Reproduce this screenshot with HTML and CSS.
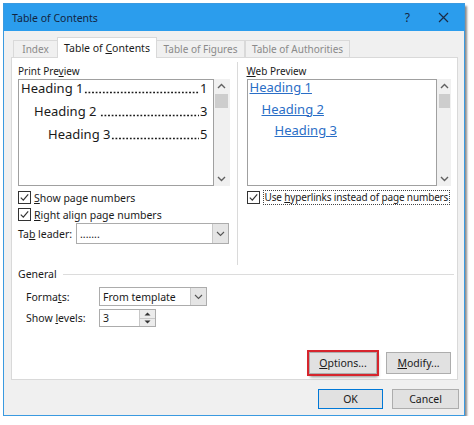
FILE: index.html
```html
<!DOCTYPE html>
<html lang="en">
<head>
    <meta charset="UTF-8">
    <meta name="viewport" content="width=device-width, initial-scale=1.0">
    <title>Table of Contents</title>
    <link rel="stylesheet" href="styles.css">
</head>
<body>
    <div class="window">
        <div class="titlebar">
            <span class="title">Table of Contents</span>
            <span class="help">?</span>
            <span class="close">
                <svg width="11" height="11" viewBox="0 0 11 11"><path d="M1 1L10 10M10 1L1 10" stroke="#1b2b45" stroke-width="1.2" fill="none"/></svg>
            </span>
        </div>
        <div class="content">
            <div class="tabs">
                <div class="tab index"><span>Index</span></div>
                <div class="tab active"><span>Table of <u>C</u>ontents</span></div>
                <div class="tab figures"><span>Table of Figures</span></div>
                <div class="tab authorities"><span>Table of Authorities</span></div>
            </div>

            <div class="panel">
                <div class="previews">
                    <div class="column print">
                        <div class="label">Print Pre<u>v</u>iew</div>
                        <div class="preview">
                            <div class="preview-list">
                                <div class="toc-row"><span class="toc-name">Heading 1</span><span class="toc-dots"></span><span class="toc-num">1</span></div>
                                <div class="toc-row level2"><span class="toc-name">Heading 2</span><span class="toc-dots spaced"></span><span class="toc-num">3</span></div>
                                <div class="toc-row level3"><span class="toc-name">Heading 3</span><span class="toc-dots"></span><span class="toc-num">5</span></div>
                            </div>
                            <div class="scrollbar">
                                <svg class="arrow" width="9" height="6" viewBox="0 0 9 6"><path d="M1 5L4.5 1.5L8 5" stroke="#606060" stroke-width="1.4" fill="none"/></svg>
                                <div class="thumb"></div>
                                <svg class="arrow down" width="9" height="6" viewBox="0 0 9 6"><path d="M1 1L4.5 4.5L8 1" stroke="#606060" stroke-width="1.4" fill="none"/></svg>
                            </div>
                        </div>
                        <div class="check">
                            <svg class="box" width="13" height="13" viewBox="0 0 13 13"><rect x="0.5" y="0.5" width="12" height="12" fill="#fff" stroke="#333"/><path d="M2.8 6.6L5.3 9.1L10.2 3.4" stroke="#333" stroke-width="1.2" fill="none"/></svg>
                            <span><u>S</u>how page numbers</span>
                        </div>
                        <div class="check">
                            <svg class="box" width="13" height="13" viewBox="0 0 13 13"><rect x="0.5" y="0.5" width="12" height="12" fill="#fff" stroke="#333"/><path d="M2.8 6.6L5.3 9.1L10.2 3.4" stroke="#333" stroke-width="1.2" fill="none"/></svg>
                            <span><u>R</u>ight align page numbers</span>
                        </div>
                        <div class="leader-row">
                            <span class="leader-label">Ta<u>b</u> leader:</span>
                            <div class="select leader">
                                <span class="select-text">.......</span>
                                <span class="drop">
                                    <svg width="9" height="6" viewBox="0 0 9 6"><path d="M1 1L4.5 4.5L8 1" stroke="#555" stroke-width="1.1" fill="none"/></svg>
                                </span>
                            </div>
                        </div>
                    </div>

                    <div class="divider"></div>

                    <div class="column web">
                        <div class="label"><u>W</u>eb Preview</div>
                        <div class="preview">
                            <div class="preview-list">
                                <div class="web-row"><a href="#">Heading 1</a></div>
                                <div class="web-row level2"><a href="#">Heading 2</a></div>
                                <div class="web-row level3"><a href="#">Heading 3</a></div>
                            </div>
                            <div class="scrollbar">
                                <svg class="arrow" width="9" height="6" viewBox="0 0 9 6"><path d="M1 5L4.5 1.5L8 5" stroke="#606060" stroke-width="1.4" fill="none"/></svg>
                                <div class="thumb"></div>
                                <svg class="arrow down" width="9" height="6" viewBox="0 0 9 6"><path d="M1 1L4.5 4.5L8 1" stroke="#606060" stroke-width="1.4" fill="none"/></svg>
                            </div>
                        </div>
                        <div class="check">
                            <svg class="box" width="13" height="13" viewBox="0 0 13 13"><rect x="0.5" y="0.5" width="12" height="12" fill="#fff" stroke="#333"/><path d="M2.8 6.6L5.3 9.1L10.2 3.4" stroke="#333" stroke-width="1.2" fill="none"/></svg>
                            <span class="focus">Use <u>h</u>yperlinks instead of page numbers</span>
                        </div>
                    </div>
                </div>

                <div class="general">
                    <div class="group-title">
                        <span>General</span>
                        <span class="group-line"></span>
                    </div>
                    <div class="field-row">
                        <span class="field-label">Forma<u>t</u>s:</span>
                        <div class="select formats">
                            <span class="select-text">From template</span>
                            <span class="drop">
                                <svg width="9" height="6" viewBox="0 0 9 6"><path d="M1 1L4.5 4.5L8 1" stroke="#555" stroke-width="1.1" fill="none"/></svg>
                            </span>
                        </div>
                    </div>
                    <div class="field-row levels">
                        <span class="field-label">Show <u>l</u>evels:</span>
                        <div class="spin">
                            <span class="select-text">3</span>
                            <span class="spin-buttons">
                                <span class="spin-btn"><svg width="7" height="4" viewBox="0 0 7 4"><path d="M0.5 3.5L3.5 0.5L6.5 3.5Z" fill="#333"/></svg></span>
                                <span class="spin-btn"><svg width="7" height="4" viewBox="0 0 7 4"><path d="M0.5 0.5L3.5 3.5L6.5 0.5Z" fill="#333"/></svg></span>
                            </span>
                        </div>
                    </div>
                </div>

                <div class="panel-buttons">
                    <button class="btn options"><u>O</u>ptions...</button>
                    <button class="btn modify"><u>M</u>odify...</button>
                </div>
            </div>

            <div class="footer">
                <button class="btn ok">OK</button>
                <button class="btn cancel">Cancel</button>
            </div>
        </div>
    </div>
</body>
</html>
```

FILE: styles.css
```css
body {
    margin: 0;
    padding: 0;
    background: #fff;
    font-family: "Noto Sans", "Open Sans", sans-serif;
    font-size: 10px;
    color: #1a1a1a;
}

.window {
    margin: 3px 0 0 3px;
    width: 462px;
    height: 413px;
    box-sizing: border-box;
    border: 1px solid #3a9ae0;
    background: #f0f0f0;
    display: flex;
    flex-direction: column;
    box-shadow: 2px 3px 2px #8c8c8c;
}

.titlebar {
    height: 27px;
    flex: 0 0 auto;
    background: #2b9ded;
    display: flex;
    align-items: center;
    padding: 0 15px 0 8px;
    color: #13243f;
    font-size: 10.5px;
}

.help {
    margin-left: auto;
    margin-right: 28px;
    font-size: 12px;
}

.close {
    display: flex;
}

.content {
    flex: 1;
    display: flex;
    flex-direction: column;
    padding: 6px 5px 0 7px;
}

.tabs {
    display: flex;
    align-items: flex-end;
    height: 20px;
    margin-left: 2px;
}

.tab {
    height: 17px;
    box-sizing: border-box;
    border: 1px solid #d9d9d9;
    border-bottom: none;
    color: #8a8a8a;
    display: flex;
    align-items: center;
    justify-content: center;
    background: #f0f0f0;
    white-space: nowrap;
}

.tab.index {
    width: 44px;
    border-right: none;
}

.tab.active {
    width: 100px;
    height: 21px;
    margin-bottom: -1px;
    background: #fff;
    color: #1a1a1a;
    font-size: 10.5px;
    position: relative;
    z-index: 1;
}

.tab.figures {
    width: 88px;
    border-left: none;
}

.tab.authorities {
    width: 105px;
    border-left: 1px solid #d9d9d9;
}

.panel {
    width: 447px;
    height: 323px;
    box-sizing: border-box;
    border: 1px solid #d9d9d9;
    background: #fff;
    padding: 0 6px 5px 6px;
    display: flex;
    flex-direction: column;
}

.previews {
    display: flex;
    margin-top: 4px;
    height: 203px;
}

.column {
    padding-top: 2px;
}

.column.print {
    width: 212px;
}

.column.web {
    width: 205px;
}

.divider {
    width: 1px;
    background: #dadada;
    margin: 0 9px 0 7px;
}

.label {
    height: 14px;
    line-height: 14px;
    margin-bottom: 1px;
}

.preview {
    display: flex;
    height: 107px;
    margin-bottom: 3px;
}

.preview-list {
    flex: 1;
    min-width: 0;
    border: 1px solid #a0a0a0;
    padding: 0 5px 0 2px;
}

.scrollbar {
    width: 16px;
    background: #f0f0f0;
    display: flex;
    flex-direction: column;
    align-items: center;
}

.web .scrollbar {
    width: 14px;
}

.arrow {
    margin-top: 4px;
}

.arrow.down {
    margin-top: auto;
    margin-bottom: 4px;
}

.thumb {
    width: calc(100% - 3px);
    height: 14px;
    margin-top: 5px;
    background: #cdcdcd;
}

.toc-row {
    display: flex;
    font-size: 13px;
    line-height: 16px;
    height: 16px;
    margin-bottom: 7px;
    white-space: nowrap;
}

/* dotted tab leader between heading and page number */
.toc-dots {
    flex: 1;
    min-width: 0;
    margin: 0 1px 0 1px;
    background-image: radial-gradient(circle, #1a1a1a 0.8px, transparent 1.2px);
    background-size: 3.6px 3px;
    background-repeat: repeat-x;
    background-position: 0 11px;
}

.toc-dots.spaced {
    margin-left: 4px;
}

.level2 {
    padding-left: 13px;
}

.level3 {
    padding-left: 27px;
}

.web-row {
    font-size: 13px;
    line-height: 15px;
    height: 15px;
    margin-bottom: 6.5px;
}

.web-row.level2 {
    padding-left: 12px;
}

.web-row.level3 {
    padding-left: 25px;
}

.web-row a {
    color: #2a6ec6;
}

.check {
    display: flex;
    align-items: center;
    height: 17px;
    white-space: nowrap;
    font-size: 10.5px;
}

.check .box {
    margin-right: 3px;
    flex: 0 0 auto;
}

.focus {
    border: 1px dotted #444;
    padding: 0 1px;
    line-height: 13px;
    font-size: 10px;
    letter-spacing: -0.15px;
}

.leader-row {
    display: flex;
    align-items: center;
    height: 21px;
    font-size: 10.5px;
}

.leader-label {
    width: 58px;
}

.select {
    display: flex;
    align-items: stretch;
    box-sizing: border-box;
    border: 1px solid #acacac;
    background: #fff;
}

.select-text {
    flex: 1;
    padding-left: 3px;
    display: flex;
    align-items: center;
}

.drop {
    width: 15px;
    background: #e5e5e5;
    border-left: 1px solid #c8c8c8;
    display: flex;
    align-items: center;
    justify-content: center;
}

.select.leader {
    width: 153px;
    height: 21px;
}

.general {
    padding-top: 2px;
    font-size: 10.5px;
}

.group-title {
    display: flex;
    align-items: center;
    height: 14px;
    margin-bottom: 6px;
}

.group-line {
    flex: 1;
    height: 1px;
    background: #dcdcdc;
    margin-left: 6px;
    margin-right: -3px;
}

.field-row {
    display: flex;
    align-items: center;
    height: 19px;
    padding-left: 8px;
}

.field-row.levels {
    margin-top: 3px;
    height: 18px;
}

.field-label {
    width: 73px;
}

.select.formats {
    width: 108px;
    height: 19px;
}

.spin {
    display: flex;
    width: 57px;
    height: 18px;
    box-sizing: border-box;
    border: 1px solid #acacac;
    background: #fff;
}

.spin-buttons {
    width: 15px;
    display: flex;
    flex-direction: column;
    border-left: 1px solid #c8c8c8;
}

.spin-btn {
    flex: 1;
    background: #ececec;
    display: flex;
    align-items: center;
    justify-content: center;
}

.spin-btn + .spin-btn {
    border-top: 1px solid #c8c8c8;
}

.panel-buttons {
    margin-top: auto;
    display: flex;
    justify-content: flex-end;
    gap: 9px;
}

.btn {
    font-family: "Noto Sans", "Open Sans", sans-serif;
    font-size: 10.5px;
    color: #1a1a1a;
    background: #e1e1e1;
    border: 1px solid #adadad;
    padding: 0;
    margin: 0;
    box-sizing: border-box;
}

.options {
    width: 68px;
    height: 22px;
    outline: 2px solid #d6252d;
    box-shadow: 1px 3px 3px rgba(0, 0, 0, 0.45);
}

.modify {
    width: 65px;
    height: 22px;
}

.footer {
    display: flex;
    justify-content: flex-end;
    gap: 9px;
    padding-top: 9px;
}

.ok {
    width: 65px;
    height: 20px;
    border-color: #0078d7;
}

.cancel {
    width: 67px;
    height: 20px;
}
```
